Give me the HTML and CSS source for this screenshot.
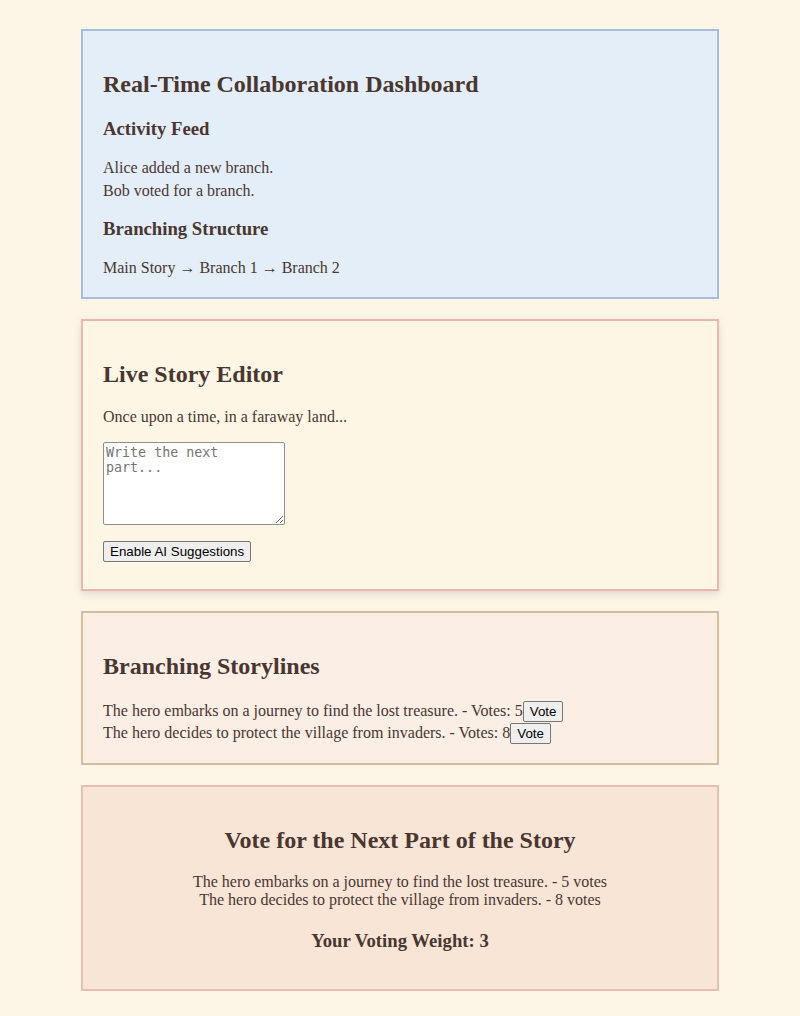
FILE: index.html
```html
<!DOCTYPE html>
<html lang="en">
<head>
<meta charset="utf-8">
<title>Collaborative Story</title>
<link rel="stylesheet" href="styles.css">
</head>
<body>
<main class="page">
  <section class="card dashboard">
    <h2>Real-Time Collaboration Dashboard</h2>
    <h3>Activity Feed</h3>
    <div class="activity">Alice added a new branch.</div>
    <div class="activity">Bob voted for a branch.</div>
    <h3>Branching Structure</h3>
    <div class="structure">Main Story → Branch 1 → Branch 2</div>
  </section>

  <section class="card editor">
    <h2>Live Story Editor</h2>
    <p>Once upon a time, in a faraway land...</p>
    <textarea class="next-part" placeholder="Write the next part..."></textarea>
    <button class="btn ai-btn">Enable AI Suggestions</button>
  </section>

  <section class="card branches">
    <h2>Branching Storylines</h2>
    <div class="branch">The hero embarks on a journey to find the lost treasure. - Votes: 5<button class="btn">Vote</button></div>
    <div class="branch">The hero decides to protect the village from invaders. - Votes: 8<button class="btn">Vote</button></div>
  </section>

  <section class="card voting">
    <h2>Vote for the Next Part of the Story</h2>
    <div class="options">
      <div class="option">The hero embarks on a journey to find the lost treasure. - 5 votes</div>
      <div class="option">The hero decides to protect the village from invaders. - 8 votes</div>
    </div>
    <h3>Your Voting Weight: 3</h3>
  </section>
</main>
</body>
</html>
```

FILE: styles.css
```css
html, body {
  margin: 0;
  padding: 0;
}

body {
  background: #fdf5e6;
  color: #4a3631;
  font-family: "Liberation Serif", "Times New Roman", serif;
  font-size: 16px;
}

.page {
  padding: 29px 0 20px;
}

.card {
  width: 638px;
  box-sizing: border-box;
  margin: 0 auto 20px;
  padding: 20px;
  border: 2px solid #b0c4de;
}

.card h2 {
  font-size: 24px;
  font-weight: bold;
  margin: 19.92px 0;
}

.card h3 {
  font-size: 18.72px;
  font-weight: bold;
  margin: 18.72px 0;
}

.dashboard {
  background: #e4eef9;
  border-color: #a9bcdb;
}

.activity {
  margin: 5px 0;
}

.editor {
  background: #fef6e5;
  border-color: #e9b9b0;
  box-shadow: 0 3px 8px rgba(0, 0, 0, 0.12);
}

.editor p {
  margin: 16px 0;
}

.next-part {
  display: block;
  box-sizing: border-box;
  width: 182px;
  height: 83px;
  margin: 0 0 16px;
  padding: 2px;
  border: 1px solid #8f8f8f;
  border-radius: 2px;
  font-family: "DejaVu Sans Mono", monospace;
  font-size: 13.33px;
  background: #fff;
  resize: both;
}

.btn {
  font-family: "Liberation Sans", Arial, sans-serif;
  font-size: 13.33px;
  color: #000;
  background: #efefef;
  border: 1px solid #767676;
  border-radius: 2px;
  padding: 2px 6px;
}

.ai-btn {
  display: block;
  margin-bottom: 7px;
}

.branches {
  background: #faeee5;
  border-color: #d5bc9d;
  padding-bottom: 19px;
}

.branch {
  line-height: 21px;
}

.voting {
  background: #f9e5d6;
  border-color: #e8bdb3;
  text-align: center;
}

.options {
  margin-top: 5px;
}

.card.voting h3 {
  margin: 21px 0 17px;
}
```
